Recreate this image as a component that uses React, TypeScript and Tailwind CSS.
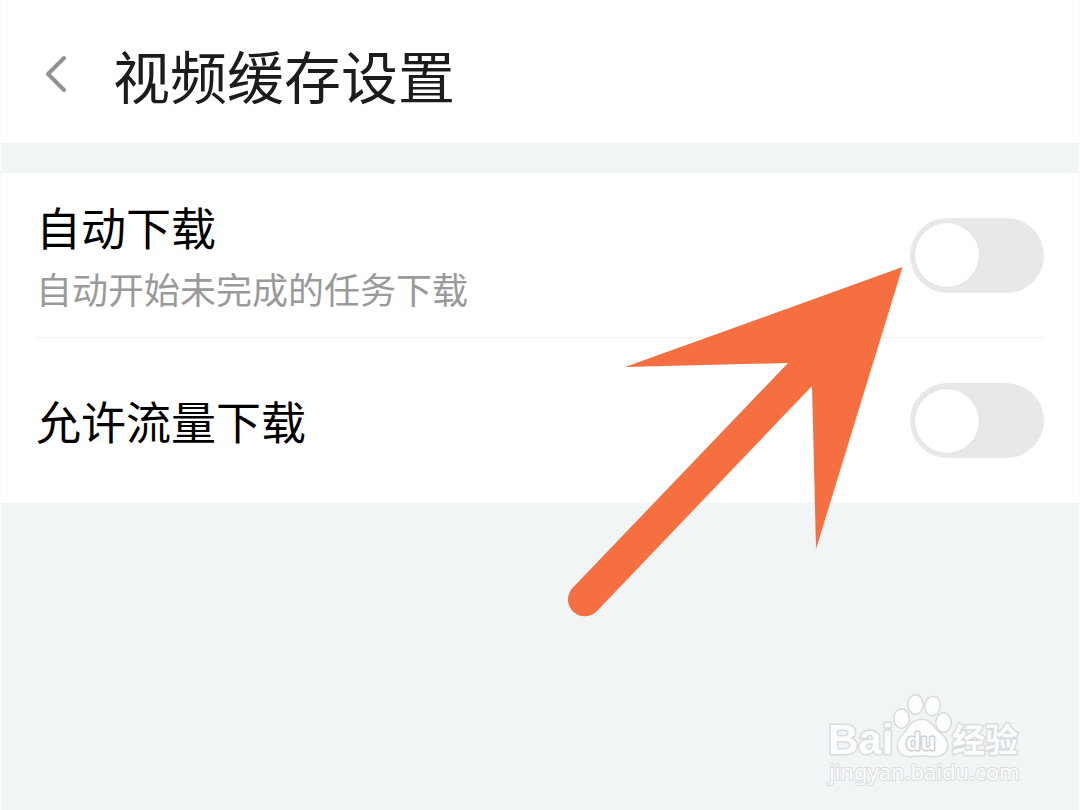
import React, { useState } from 'react';

interface Setting {
  id: string;
  title: string;
  description?: string;
}

const settings: Setting[] = [
  { id: 'auto-download', title: '自动下载', description: '自动开始未完成的任务下载' },
  { id: 'mobile-data', title: '允许流量下载' },
];

const PointerArrow: React.FC = () => (
  <svg
    className="pointer-events-none absolute top-[94px] right-[176px] w-[336px] h-[352px]"
    viewBox="567 267 336 352"
    fill="#f66f40"
    aria-hidden="true"
  >
    <path d="M902.500 267 L625 367 L788 363 L573 587.500 A16.500 16.500 0 0 0 596.500 611.500 L812 386 L816 549 Z" />
  </svg>
);

const Watermark: React.FC = () => (
  <svg
    className="w-[204px] h-[100px]"
    viewBox="824 692 204 100"
    fill="#fbfdfe"
    stroke="#d9dcde"
    strokeWidth="3"
    paintOrder="stroke"
    strokeLinejoin="round"
  >
    <text x="828" y="754" className="font-['Liberation_Sans',sans-serif] font-bold text-[42px]">Bai</text>
    {/* Paw */}
    <ellipse cx="901.500" cy="718.500" rx="7" ry="9" />
    <ellipse cx="915.500" cy="704.500" rx="7" ry="9" />
    <ellipse cx="932.500" cy="706" rx="7" ry="9" transform="rotate(10 932.500 706)" />
    <ellipse cx="943.500" cy="722.500" rx="7" ry="9" />
    <path d="M922 720 C929 720 932 725 936 730 C941 735 947 738 947 745 C947 753 941 756 934 756 C929 756 926 755 922 755 C917 755 914 756 909 756 C903 756 898 752 898 745 C898 738 904 735 908 729 C912 723 915 720 922 720 Z" />
    <text x="906" y="750" stroke="#cfd2d4" className="font-['Liberation_Sans',sans-serif] font-bold text-[24px]">du</text>
    <text x="952" y="752" className="font-['Noto_Sans_CJK_SC',sans-serif] font-bold text-[33px]">经验</text>
    <text x="829" y="780" strokeWidth="2" className="font-['Noto_Sans',sans-serif] text-[22px]">jingyan.baidu.com</text>
  </svg>
);

const App: React.FC = () => {
  const [enabled, setEnabled] = useState<Record<string, boolean>>({});

  const toggle = (id: string) => {
    setEnabled(prev => ({ ...prev, [id]: !prev[id] }));
  };

  return (
    <div className="flex flex-col min-h-screen border-x border-[#fafcfc] bg-[#f1f5f6] font-['Noto_Sans_CJK_SC',sans-serif]">
      <header className="flex items-center gap-[46px] bg-white px-[42px] pt-1 h-[143px]">
        <button type="button" aria-label="返回" className="shrink-0">
          <svg className="w-6 h-10" viewBox="0 0 24 40" fill="none" stroke="#929292" strokeWidth="4" strokeLinecap="round" strokeLinejoin="round">
            <path d="M21 4 L5 20 L21 36" />
          </svg>
        </button>
        <h1 className="text-[57px] leading-[80px] text-[#1c1c1c]">视频缓存设置</h1>
      </header>

      <main className="relative mt-[30px] bg-white px-[35px]">
        {settings.map(setting => (
          <div
            key={setting.id}
            className="flex items-center justify-between h-[165px] border-b border-[#efefef] last-of-type:border-b-0"
          >
            <label htmlFor={setting.id} className="flex flex-col gap-2">
              <span className="text-[45px] leading-[58px] text-black">{setting.title}</span>
              {setting.description && (
                <span className="text-[36px] leading-[48px] text-[#9a9a9a]">{setting.description}</span>
              )}
            </label>
            <input
              id={setting.id}
              type="checkbox"
              role="switch"
              checked={!!enabled[setting.id]}
              onChange={() => toggle(setting.id)}
              className="appearance-none flex items-center shrink-0 w-[134px] h-[75px] p-[5px] rounded-full bg-[#e8e8ea] cursor-pointer transition-colors checked:bg-[#f66f40] before:block before:size-16 before:rounded-full before:bg-white before:shadow-[0_0_2px_rgba(0,0,0,0.08)] before:transition-transform checked:before:translate-x-[60px]"
            />
          </div>
        ))}
        <PointerArrow />
      </main>

      <footer className="flex justify-end mt-auto pr-[51px] pb-[18px]">
        <Watermark />
      </footer>
    </div>
  );
};

export default App;
